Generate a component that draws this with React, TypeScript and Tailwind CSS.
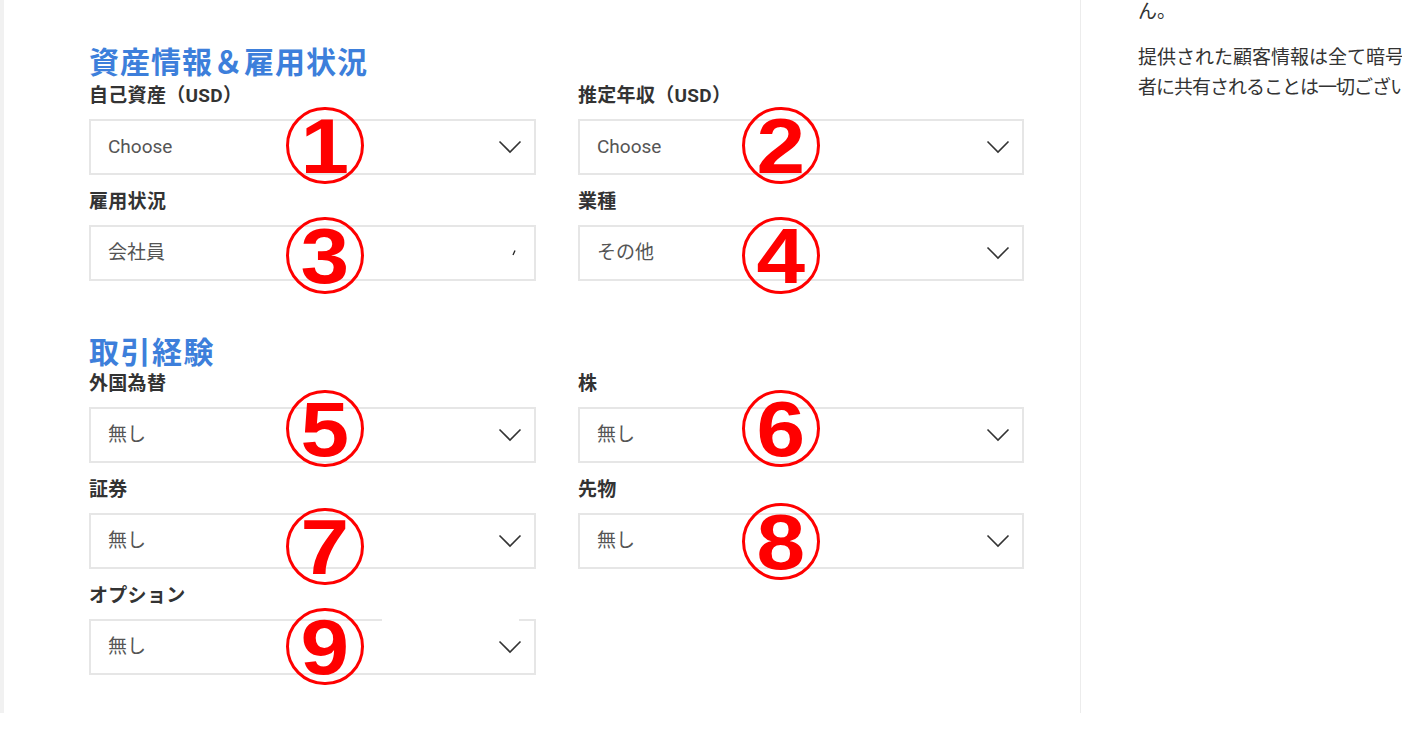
import type { ReactNode } from "react";

type FieldProps = {
  label: ReactNode;
  value: string;
  mark: string;
  markX: number;
  markY: number;
  chevron?: boolean;
  tick?: boolean;
  borderGap?: boolean;
};

function Chevron() {
  return (
    <svg width="24" height="14" viewBox="0 0 24 14" fill="none" className="shrink-0">
      <polyline points="1.5,1.5 12,12 22.5,1.5" stroke="#333" strokeWidth="1.6" />
    </svg>
  );
}

function Field({ label, value, mark, markX, markY, chevron = true, tick = false, borderGap = false }: FieldProps) {
  return (
    <div className="flex flex-col">
      <div className="h-[24px] leading-[24px] text-[19px] font-bold text-[#333] whitespace-nowrap tracking-[0.3px]">{label}</div>
      <div className="relative mt-[11px] h-[56px] border-2 border-[#e6e6e6] bg-white flex items-center justify-between pl-[17px] pr-[12px]">
        <span className="text-[19px] text-[#555]">{value}</span>
        {chevron && <Chevron />}
        {tick && (
          <svg width="4" height="6" viewBox="0 0 4 6" className="mr-[6px]">
            <line x1="3" y1="0.5" x2="1" y2="5" stroke="#222" strokeWidth="1.3" />
          </svg>
        )}
        {borderGap && <div className="absolute top-[-2px] left-[291px] w-[137px] h-[3px] bg-white" />}
        <div
          className="absolute z-10 w-[78px] h-[77px] rounded-full border-[3px] border-[#ff0000] flex items-center justify-center font-['Liberation_Sans',Arial,sans-serif] font-bold text-[#ff0000] text-[78px] leading-none"
          style={{ left: markX, top: markY }}
        >
          <span className="scale-x-[1.12] inline-block">{mark}</span>
        </div>
      </div>
    </div>
  );
}

export default function App() {
  return (
    <div className="w-[1402px] h-[741px] overflow-hidden bg-white font-['Roboto','Noto_Sans_CJK_JP',sans-serif]">
      <div className="flex h-[713px]">
        <div className="w-[1081px] shrink-0 border-l-4 border-[#f1f1f1] border-r border-r-[#ececec] pl-[85px] pt-[45px]">
          <h2 className="text-[30px] leading-[36px] font-bold tracking-[1px] text-[#3d7fdb] mb-[3px]">資産情報＆雇用状況</h2>
          <div className="grid grid-cols-[447px_446px] gap-x-[42px] gap-y-[15px]">
            <Field label="自己資産（USD）" value="Choose" mark="1" markX={195} markY={-14} />
            <Field label="推定年収（USD）" value="Choose" mark="2" markX={162} markY={-14} />
            <Field label="雇用状況" value="会社員" mark="3" markX={195} markY={-10} chevron={false} tick />
            <Field label="業種" value="その他" mark="4" markX={162} markY={-10} />
          </div>

          <h2 className="mt-[54px] text-[30px] leading-[36px] font-bold tracking-[1.5px] text-[#3d7fdb] mb-[1px]">取引経験</h2>
          <div className="grid grid-cols-[447px_446px] gap-x-[42px] gap-y-[15px]">
            <Field label="外国為替" value="無し" mark="5" markX={195} markY={-19} />
            <Field label="株" value="無し" mark="6" markX={162} markY={-19} />
            <Field label="証券" value="無し" mark="7" markX={195} markY={-7} />
            <Field label="先物" value="無し" mark="8" markX={162} markY={-12} />
            <Field label="オプション" value="無し" mark="9" markX={195} markY={-13} borderGap />
          </div>
        </div>

        <div className="w-[460px] shrink-0 pl-[57px] text-[19px] text-[#333] whitespace-nowrap">
          <p className="leading-[24px]">ん。</p>
          <p className="mt-[19px] leading-[30px]">
            提供された顧客情報は全て暗号化され、第三
            <br />
            <span className="tracking-[-1px]">者に共有されることは一切ございません。</span>
          </p>
        </div>
      </div>
    </div>
  );
}
